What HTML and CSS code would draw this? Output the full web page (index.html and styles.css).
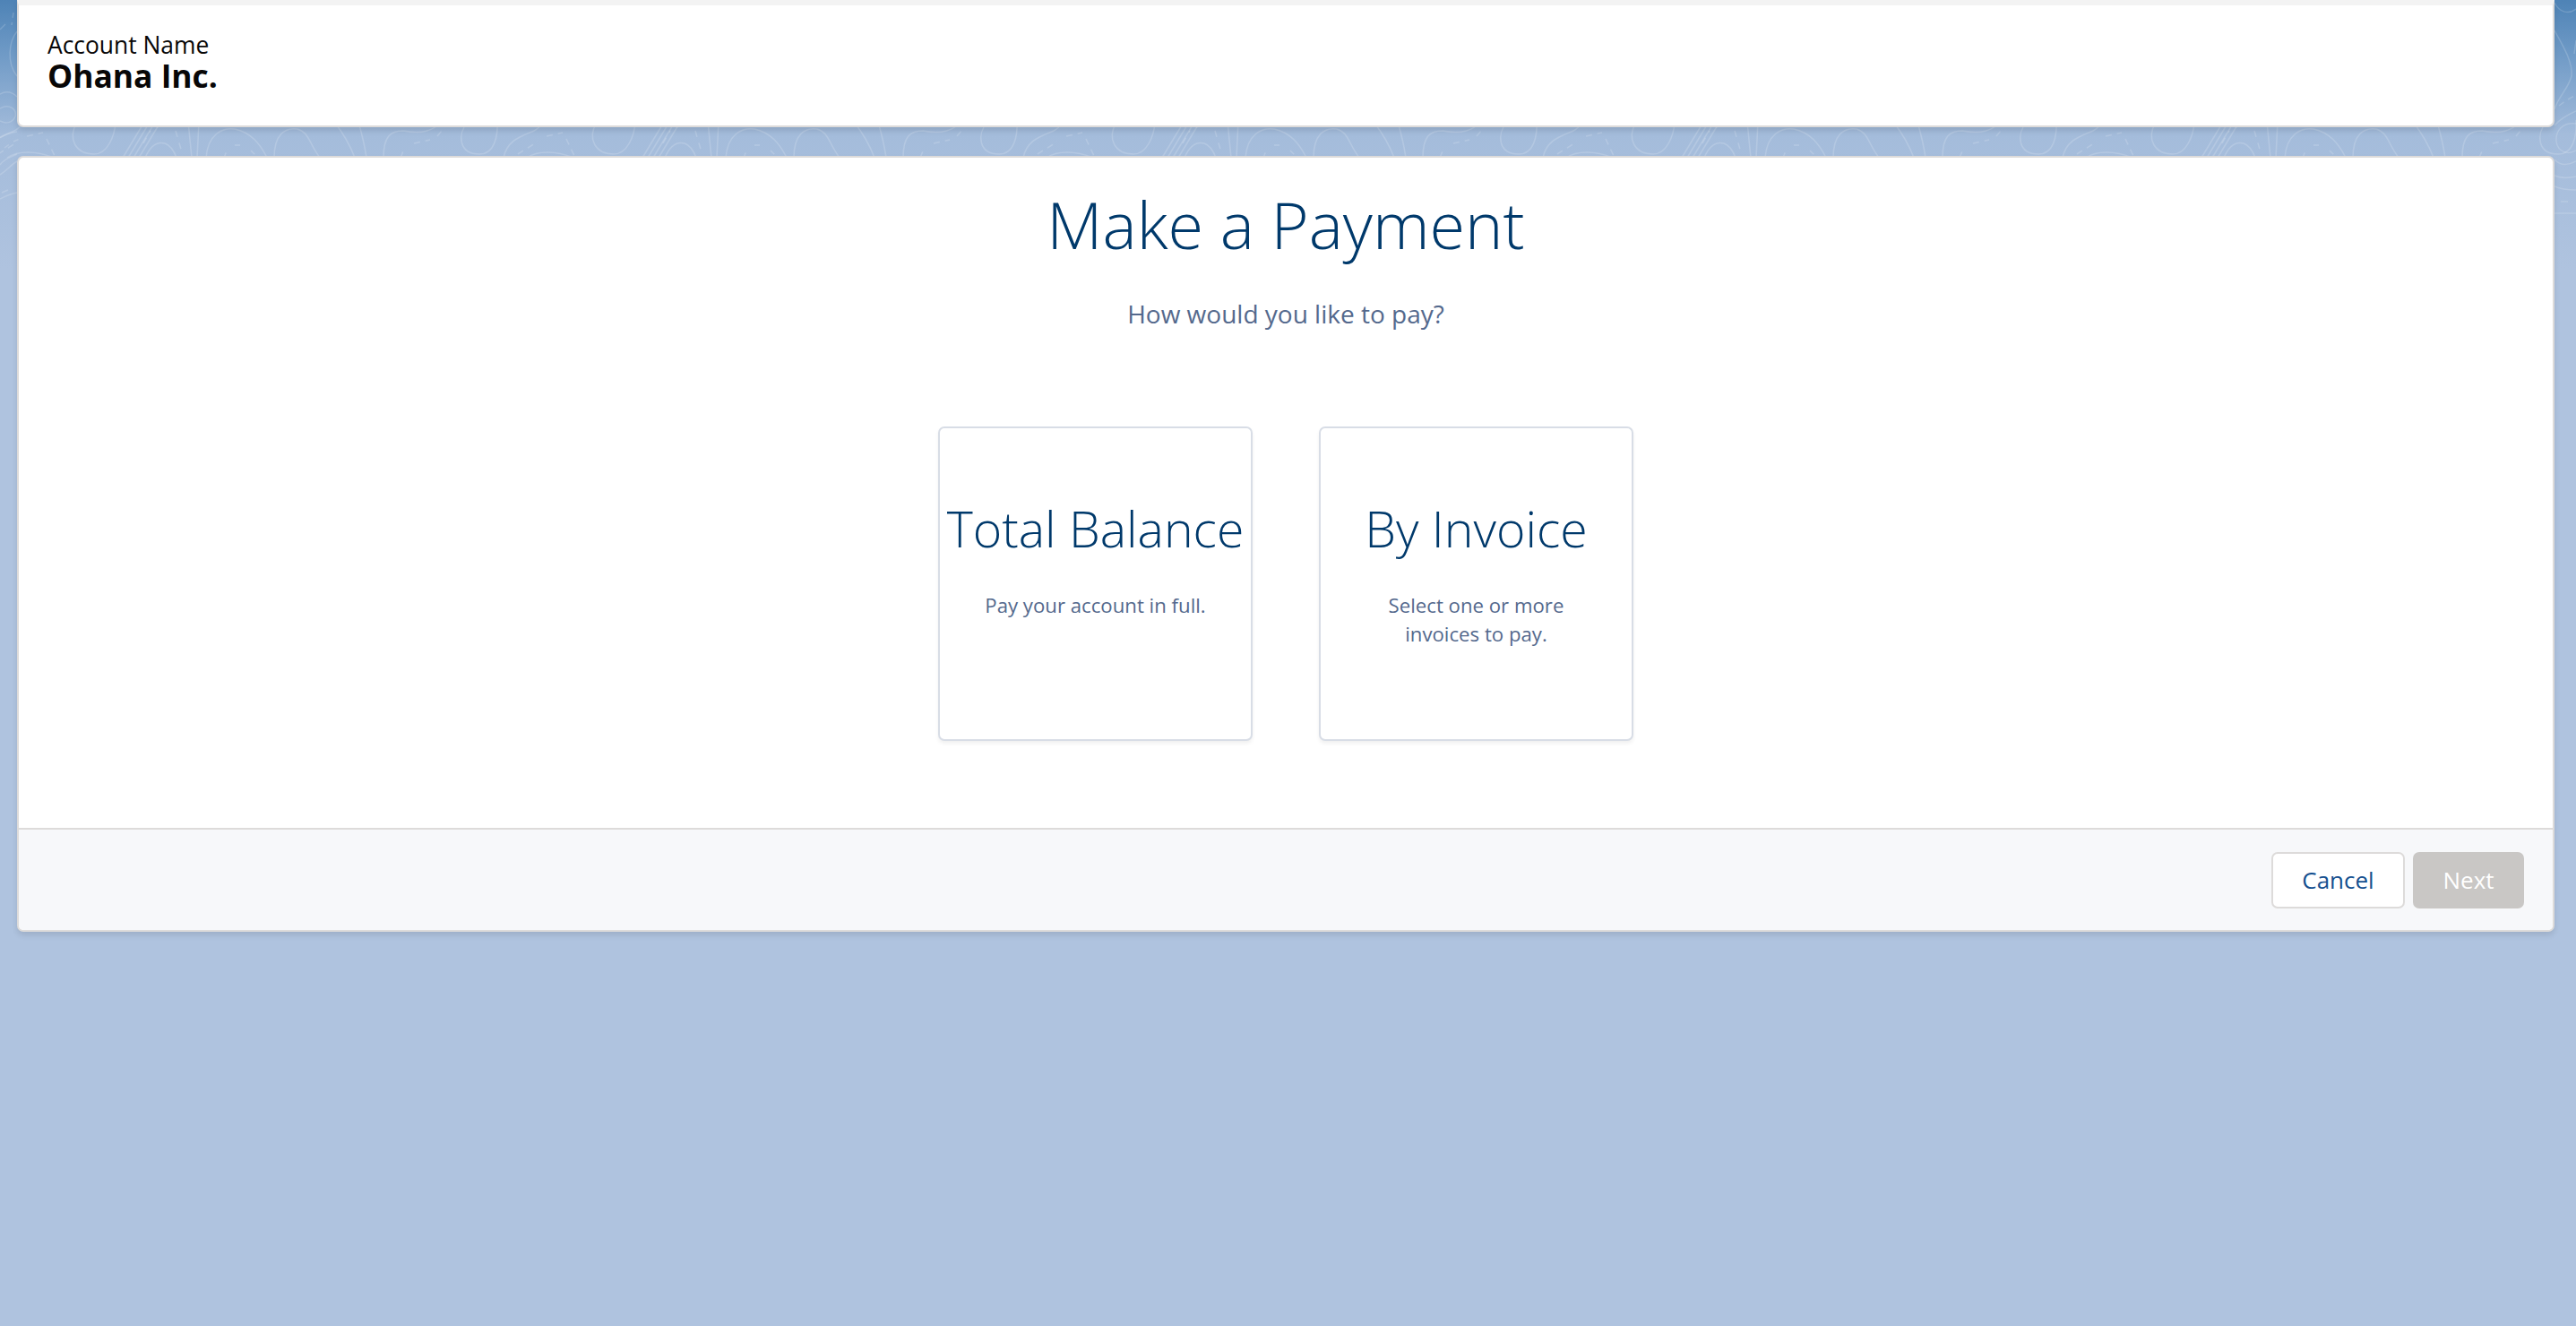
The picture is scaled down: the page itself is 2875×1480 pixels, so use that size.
FILE: index.html
```html
<!DOCTYPE html>
<html lang="en">
<head>
<meta charset="utf-8">
<title>Make a Payment</title>
<link rel="stylesheet" href="styles.css">
</head>
<body>
<svg class="topo" width="2875" height="240" viewBox="0 0 2875 240" aria-hidden="true">
  <defs>
    <pattern id="topo-tile" width="580" height="240" patternUnits="userSpaceOnUse">
      <g id="topo-lines">
        <path d="M85 138C76 155 84 172 105 172C120 172 128 152 129 136"/>
        <path d="M137 176L160 138M143 176L166 138M149 176L172 138M155 176L178 138"/>
        <path d="M162 176C168 162 176 158 184 160C190 162 194 168 197 176"/>
        <path d="M160 160L168 146M175 142L182 140M196 146L203 170" stroke-dasharray="7 7"/>
        <path d="M210 136L214 176M222 136L220 176"/>
        <path d="M230 176C232 150 248 142 262 144C280 148 290 160 298 176"/>
        <path d="M250 176L254 166M262 162L272 162M280 168L288 176" stroke-dasharray="6 7"/>
        <path d="M306 176C306 150 318 142 332 144C345 148 345 160 357 176"/>
        <path d="M373 136C384 150 390 160 396 176M400 136C404 150 407 162 409 176"/>
        <path d="M428 176C428 152 436 146 450 146C472 150 482 146 494 136"/>
        <path d="M447 176L452 164M462 160L480 156M488 152L498 140" stroke-dasharray="7 6"/>
        <path d="M522 136C510 150 512 172 535 172C552 172 556 152 555 134"/>
        <path d="M562 176C566 156 582 152 596 146C600 144 604 140 608 136"/>
        <path d="M578 172L600 158M610 152L628 148M632 155L642 176" stroke-dasharray="7 6"/>
        <path d="M588 176C600 168 620 168 640 176"/>
      </g>
      <use href="#topo-lines" x="-580"/>
    </pattern>
  </defs>
  <rect class="topo-fill" x="0" y="130" width="2875" height="50"/>
  <g class="topo-sides">
    <path d="M15 14L13 28" stroke-dasharray="6 5"/>
    <path d="M6 27L0 33"/>
    <path d="M19 35C10 46 7 70 19 85"/>
    <path d="M0 105C7 101 14 103 19 108"/>
    <path d="M0 121C10 115 19 122 17 130C14 138 5 138 0 135"/>
    <path d="M0 154C6 150 12 148 19 147"/>
    <path d="M5 165L12 160M15 158L22 155" stroke-dasharray="6 5"/>
    <path d="M0 184C6 176 12 176 19 172M0 195C8 190 12 184 19 180"/>
    <path d="M2 215L9 212M0 222C8 218 14 216 19 215"/>
    <path d="M2851 3C2856 13 2866 17 2875 10"/>
    <path d="M2851 34C2860 50 2872 70 2870 85C2866 100 2855 108 2851 122"/>
    <path d="M2856 118L2864 112M2866 111L2875 106" stroke-dasharray="7 5"/>
    <path d="M2851 140C2858 132 2866 128 2875 124"/>
    <path d="M2875 138C2860 136 2852 146 2853 158C2855 170 2866 173 2875 168"/>
    <path d="M2851 178C2858 186 2868 184 2875 180M2851 196C2860 200 2868 198 2875 197M2851 208C2860 212 2868 212 2875 212"/>
    <path d="M2858 225L2866 225M2851 238L2875 238"/>
    <path d="M2875 45L2873 60" stroke-width="3"/>
  </g>
</svg>

<main class="page">
  <section class="card account">
    <div class="account-label">Account Name</div>
    <div class="account-name">Ohana Inc.</div>
  </section>

  <section class="card payment">
    <div class="payment-body">
      <h1 class="payment-title">Make a Payment</h1>
      <p class="payment-sub">How would you like to pay?</p>
      <div class="tiles">
        <button class="tile" type="button">
          <span class="tile-title">Total Balance</span>
          <span class="tile-text">Pay your account in full.</span>
        </button>
        <button class="tile" type="button">
          <span class="tile-title">By Invoice</span>
          <span class="tile-text">Select one or more<br>invoices to pay.</span>
        </button>
      </div>
    </div>
    <footer class="payment-foot">
      <button class="btn btn-cancel" type="button">Cancel</button>
      <button class="btn btn-next" type="button" disabled>Next</button>
    </footer>
  </section>
</main>
</body>
</html>
```
FILE: styles.css
```css
* { box-sizing: border-box; }

html, body { margin: 0; height: 100%; }

body {
  position: relative;
  overflow: hidden;
  font-family: "Open Sans", "Noto Sans", sans-serif;
  background: linear-gradient(#4e83b6 0, #6f9ac6 60px, #a4bcdb 150px, #afc3df 300px) no-repeat #afc3df;
}

.topo { position: absolute; left: 0; top: 0; display: block; }
.topo-fill { fill: url(#topo-tile); }
.topo path { fill: none; stroke: rgba(255, 255, 255, .17); stroke-width: 1.5; }

.page {
  position: relative;
  display: flex;
  flex-direction: column;
  gap: 32px;
  padding: 0 24px 0 19px;
}

.card {
  background: #fff;
  border: 2px solid #dddbda;
  border-radius: 7px;
  box-shadow: 0 4px 6px rgba(0, 0, 0, .1);
}

.account {
  height: 142px;
  padding: 29px 0 0 32px;
  border-top: 6px solid #f3f3f3;
  border-radius: 0 0 7px 7px;
}

.account-label {
  font-size: 26.4px;
  line-height: 30px;
  color: #080707;
}

.account-name {
  font-size: 35.4px;
  line-height: 38px;
  font-weight: 700;
  color: #080707;
}

.payment { height: 866px; display: flex; flex-direction: column; }

.payment-body { flex: 1; text-align: center; }

.payment-title {
  margin: 0;
  padding-top: 26px;
  font-size: 72px;
  line-height: 96px;
  font-weight: 340;
  color: #00396b;
}

.payment-sub {
  margin: 32px 0 0;
  font-size: 28px;
  line-height: 40px;
  color: #54698d;
}

.tiles {
  display: flex;
  justify-content: center;
  gap: 74px;
  margin-top: 106px;
}

.tile {
  display: flex;
  flex-direction: column;
  align-items: center;
  width: 351px;
  height: 351px;
  padding: 70px 0 0;
  background: #fff;
  border: 2px solid #d8dde6;
  border-radius: 7px;
  box-shadow: 0 3px 4px rgba(0, 0, 0, .06);
  font-family: inherit;
}

.tile-title {
  font-size: 55.4px;
  line-height: 84px;
  font-weight: 340;
  color: #00396b;
  white-space: nowrap;
}

.tile-text {
  margin-top: 28px;
  font-size: 22.2px;
  line-height: 32px;
  color: #54698d;
}

.payment-foot {
  display: flex;
  justify-content: flex-end;
  align-items: center;
  gap: 9px;
  height: 114px;
  padding: 0 32px 0 0;
  background: #f7f8fa;
  border-top: 2px solid #dddbda;
  border-radius: 0 0 5px 5px;
}

.btn {
  height: 63px;
  border-radius: 7px;
  padding: 0;
  font-family: inherit;
  font-size: 26px;
}

.btn-cancel {
  width: 149px;
  background: #fff;
  border: 2px solid #dddbda;
  color: #14508f;
}

.btn-next {
  width: 124px;
  background: #c9c7c5;
  border: 0;
  color: #fff;
}
```
